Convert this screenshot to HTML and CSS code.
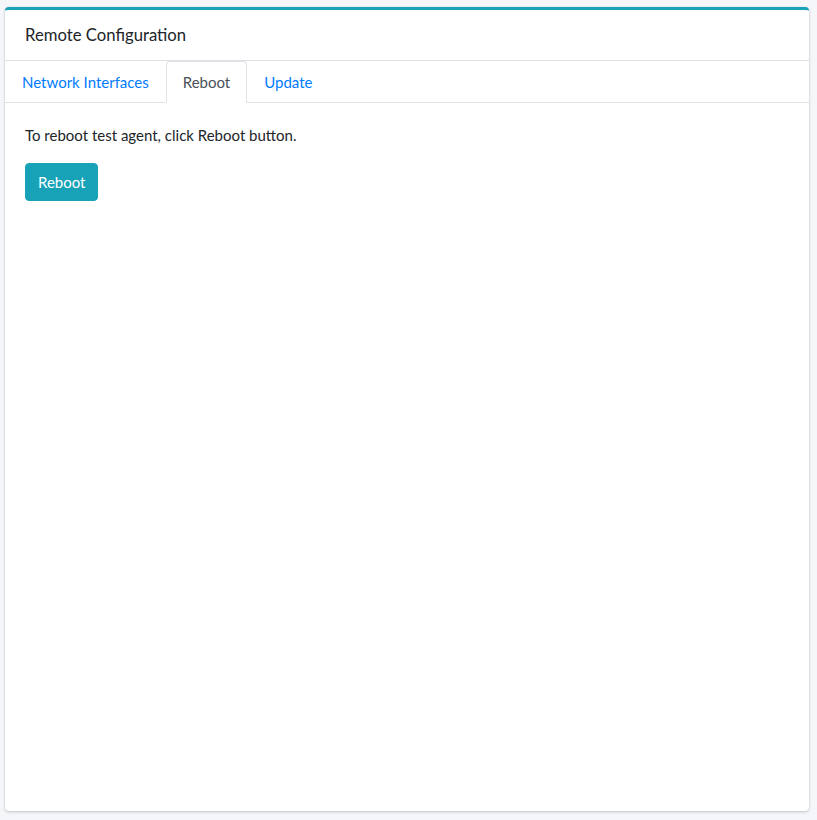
FILE: index.html
```html
<!DOCTYPE html>
<html lang="en">
<head>
<meta charset="utf-8">
<title>Remote Configuration</title>
<link rel="stylesheet" href="styles.css">
</head>
<body>
<div class="page">
  <div class="card">
    <div class="card-header">
      <h3 class="card-title">Remote Configuration</h3>
    </div>
    <ul class="nav-tabs">
      <li class="nav-item"><a class="nav-link" href="#">Network Interfaces</a></li>
      <li class="nav-item"><a class="nav-link active" href="#">Reboot</a></li>
      <li class="nav-item"><a class="nav-link" href="#">Update</a></li>
    </ul>
    <div class="card-body">
      <p class="intro">To reboot test agent, click Reboot button.</p>
      <button class="btn-info" type="button">Reboot</button>
    </div>
  </div>
</div>
</body>
</html>
```

FILE: styles.css
```css
* { box-sizing: border-box; }
html, body {
  margin: 0;
  height: 100%;
}
body {
  background: #f4f6f9;
  font-family: Lato, "Noto Sans", sans-serif;
  font-size: 15px;
  line-height: 24px;
  color: #212529;
}
.page {
  height: 100%;
  padding: 7px 8px 9px 5px;
  display: flex;
}
.card {
  flex: 1;
  display: flex;
  flex-direction: column;
  background: #fff;
  border-top: 3px solid #17a2b8;
  border-radius: 4px;
  box-shadow: 0 0 1px rgba(0,0,0,.125), 0 1px 3px rgba(0,0,0,.2);
}
.card-header {
  height: 51px;
  padding: 0 20px;
  display: flex;
  align-items: center;
  border-bottom: 1px solid #dee2e6;
}
.card-title {
  margin: 0;
  font-size: 16.7px;
  font-weight: 400;
  line-height: 24px;
  color: #212529;
}
.nav-tabs {
  list-style: none;
  margin: 0;
  padding: 0;
  display: flex;
  border-bottom: 1px solid #dee2e6;
}
.nav-item {
  margin-bottom: -1px;
}
.nav-link {
  display: block;
  padding: 8px 16px;
  border: 1px solid transparent;
  border-top-left-radius: 4px;
  border-top-right-radius: 4px;
  color: #007bff;
  text-decoration: none;
  white-space: nowrap;
}
.nav-link.active {
  color: #495057;
  background: #fff;
  border-color: #dee2e6 #dee2e6 #fff;
}
.card-body {
  flex: 1;
  padding: 20px;
}
.intro {
  margin: 0 0 16px;
}
.btn-info {
  display: inline-block;
  font-family: inherit;
  font-size: 15px;
  line-height: 24px;
  padding: 6px 12px;
  color: #fff;
  background: #17a2b8;
  border: 1px solid #17a2b8;
  border-radius: 4px;
  cursor: pointer;
}
```
